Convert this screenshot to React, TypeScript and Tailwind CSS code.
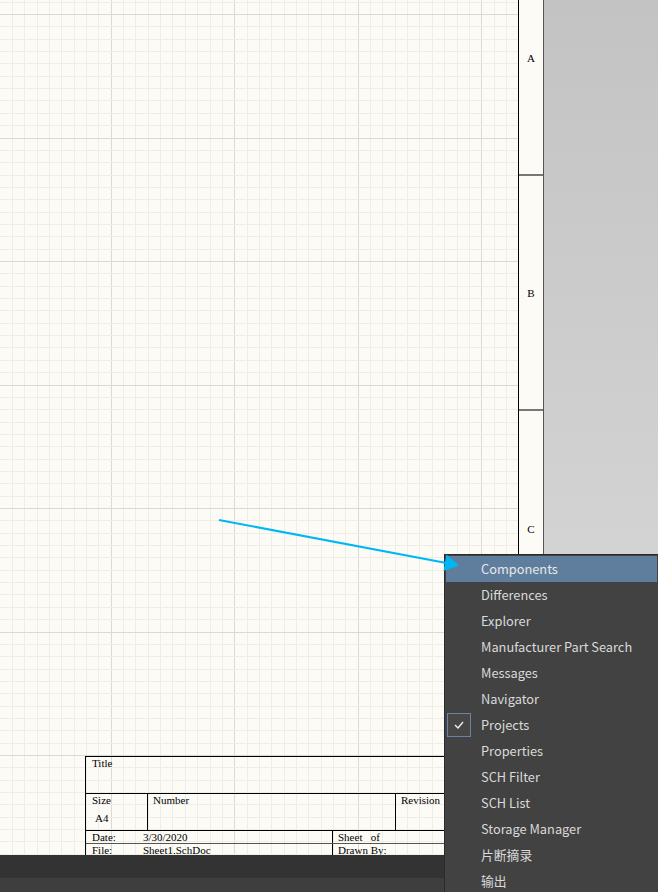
import React from "react";

const GridLines = () => {
  const W = 518;
  const H = 855;
  const step = 12.35;
  const lines: React.ReactNode[] = [];
  for (let k = -9; ; k++) {
    const x = 110.7 + step * k;
    if (x > W) break;
    if (x < 0) continue;
    const major = k % 10 === 0;
    const xx = Math.round(x) + 0.5;
    lines.push(
      <line key={"v" + k} x1={xx} y1={0} x2={xx} y2={H} stroke={major ? "#dbd9d3" : "#efede7"} strokeWidth={1} />
    );
  }
  for (let k = -1; ; k++) {
    const y = 14 + step * k;
    if (y > H) break;
    if (y < 0) continue;
    const major = k % 10 === 0;
    const yy = Math.round(y) + 0.5;
    lines.push(
      <line key={"h" + k} x1={0} y1={yy} x2={W} y2={yy} stroke={major ? "#dbd9d3" : "#efede7"} strokeWidth={1} />
    );
  }
  return (
    <svg className="absolute inset-0" width={W} height={H} viewBox={`0 0 ${W} ${H}`}>
      {lines}
    </svg>
  );
};

const items = [
  "Components",
  "Differences",
  "Explorer",
  "Manufacturer Part Search",
  "Messages",
  "Navigator",
  "Projects",
  "Properties",
  "SCH Filter",
  "SCH List",
  "Storage Manager",
  "片断摘录",
  "输出",
];

export default function App() {
  const serif = { fontFamily: '"Liberation Serif", "Times New Roman", serif' };
  return (
    <div className="relative w-[658px] h-[892px] overflow-hidden bg-[#333333]">
      <div className="flex h-[855px]">
        {/* canvas */}
        <div className="relative w-[518px] h-full bg-[#fdfbf6] overflow-hidden">
          <GridLines />
          {/* title block */}
          <div
            className="absolute left-[85px] top-[756px] w-[440px] border-t border-l border-black text-[11px] leading-[12px] text-black"
            style={serif}
          >
            <div className="h-[37px] border-b border-black pl-[6px]">Title</div>
            <div className="flex h-[37px] border-b border-black">
              <div className="w-[62px] border-r border-black pl-[6px]">
                <div>Size</div>
                <div className="pl-[3px] pt-[6px]">A4</div>
              </div>
              <div className="w-[248px] border-r border-black pl-[5px]">Number</div>
              <div className="flex-1 pl-[5px]">Revision</div>
            </div>
            <div className="flex h-[13px] border-b border-[#555555]">
              <div className="w-[57px] pl-[6px]">Date:</div>
              <div className="w-[190px] border-r border-black">3/30/2020</div>
              <div className="flex-1 pl-[5px]">Sheet&nbsp;&nbsp;&nbsp;of</div>
            </div>
            <div className="flex h-[13px]">
              <div className="w-[57px] pl-[6px]">File:</div>
              <div className="w-[190px] border-r border-black">Sheet1.SchDoc</div>
              <div className="flex-1 pl-[5px]">Drawn By:</div>
            </div>
          </div>
        </div>
        {/* zone column */}
        <div className="w-[26px] h-full border-l border-black border-r border-r-[#555555] bg-[#fdfbf6] flex flex-col text-[11px] text-black" style={serif}>
          <div className="h-[235px] -mt-[59px] shrink-0 border-b-2 border-[#777777] flex items-center justify-center pt-[2px]">A</div>
          <div className="h-[235px] shrink-0 border-b-2 border-[#777777] flex items-center justify-center pt-[2px]">B</div>
          <div className="h-[235px] shrink-0 flex items-center justify-center pt-[2px]">C</div>
        </div>
        {/* gray area */}
        <div className="flex-1 h-full bg-gradient-to-b from-[#c3c3c3] to-[#dcdcdc]" />
      </div>
      {/* bottom bar */}
      <div className="h-[23px] bg-[#333333]" />
      <div className="h-[14px] bg-[#3e3e3e]" />

      {/* menu */}
      <div
        className="absolute left-[444px] top-[554px] w-[216px] h-[345px] bg-[#424242] border border-[#2b2b2b] pt-[1px]"
        style={{ fontFamily: '"Noto Sans CJK SC", "Noto Sans", sans-serif' }}
      >
        {items.map((it, i) => (
          <div
            key={it}
            className={
              "relative h-[26px] flex items-center pb-[1px] text-[12.8px] " +
              (i === 0 ? "bg-[#5f7e9e] text-[#e8e8e8] mr-[2px] ml-[1px] pl-[35px]" : "text-[#dadada] pl-[36px]")
            }
          >
            {it === "Projects" && (
              <div className="absolute left-[2px] top-[1px] w-[24px] h-[24px] border border-[#6883a3] bg-[#474747] flex items-center justify-center">
                <svg width="10" height="8" viewBox="0 0 10 8">
                  <path d="M1 4 L4 7 L9 1" stroke="#f0f0f0" strokeWidth="1.4" fill="none" />
                </svg>
              </div>
            )}
            {it}
          </div>
        ))}
      </div>

      {/* arrow */}
      <svg className="absolute inset-0 pointer-events-none" width={658} height={892}>
        <line x1={219} y1={520} x2={449} y2={563.5} stroke="#00b7f5" strokeWidth={2.2} />
        <polygon points="446.5,554.5 459,565.5 443.5,571" fill="#00b7f5" />
      </svg>
    </div>
  );
}
